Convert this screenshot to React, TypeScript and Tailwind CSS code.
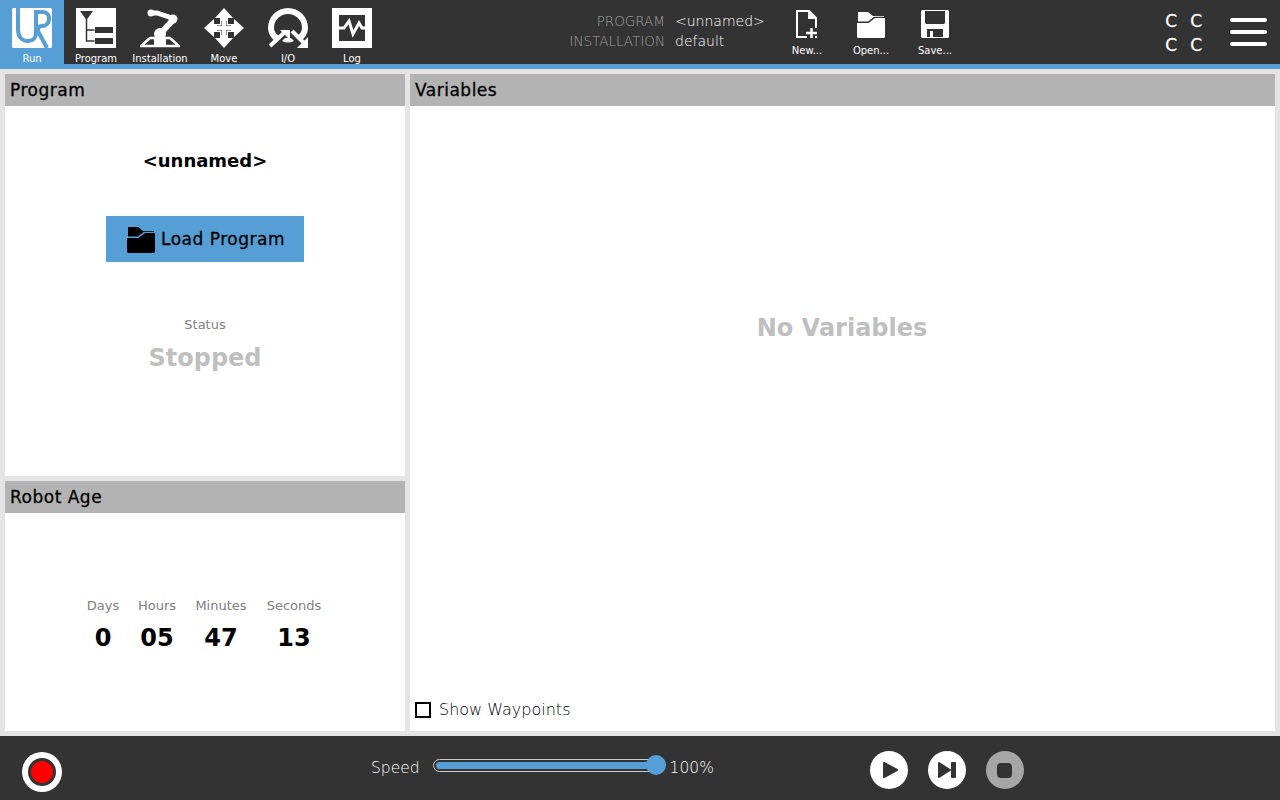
import type { ReactNode } from "react";

const font = "font-['DejaVu_Sans',sans-serif]";

function NavTab({ label, active, children }: { label: string; active?: boolean; children: ReactNode }) {
  return (
    <div className={`flex h-16 w-16 flex-col items-center pt-2 ${active ? "bg-[#559fd6]" : ""}`}>
      <div className="h-10 w-10">{children}</div>
      <span className="mt-[5px] text-[10px] leading-3 text-white">{label}</span>
    </div>
  );
}

function FileButton({ label, children }: { label: string; children: ReactNode }) {
  return (
    <div className="flex h-16 w-16 flex-col items-center pt-2">
      <div className="h-8 w-8">{children}</div>
      <span className="mt-[5px] text-[10px] leading-3 text-white">{label}</span>
    </div>
  );
}

function PanelHeader({ title }: { title: string }) {
  return (
    <div className="flex h-8 items-center bg-[#b3b3b3] px-[5px] pt-[2px] text-[17px] tracking-[0.5px] text-black [-webkit-text-stroke:0.3px_black]">
      {title}
    </div>
  );
}

function AgeCell({ label, value, width }: { label: string; value: string; width: string }) {
  return (
    <div className={`flex flex-col items-center ${width}`}>
      <span className="text-[13px] leading-4 text-[#808080]">{label}</span>
      <span className="mt-[10px] text-[24px] leading-7 font-bold text-black">{value}</span>
    </div>
  );
}

function FolderIcon({ fill }: { fill: string }) {
  return (
    <svg viewBox="0 0 32 32" className="h-full w-full" fill={fill}>
      <path d="M3 4h10l5 4h11v.8H19l-6 4.700H3z" />
      <path d="M2 15h11.500l6.500-5h10v19l-1 1H3l-1-1z" />
    </svg>
  );
}

export default function App() {
  return (
    <div className={`flex h-[800px] w-[1280px] flex-col overflow-hidden bg-[#e4e4e4] ${font}`}>
      <header className="flex h-[69px] shrink-0 border-b-[5px] border-[#559fd6] bg-[#333333]">
        <NavTab label="Run" active>
          <svg viewBox="0 0 40 40" className="h-full w-full">
            <rect width="40" height="40" rx="1.500" fill="#fff" />
            <path d="M6 0v21c0 8 4 12 10 12 5 0 8-3 8-8V4" fill="none" stroke="#559fd6" strokeWidth="4" />
            <path d="M22 4h9c4 0 6 3 6 7s-3 7-7 7c-4 0-5 3-3 7l8 15" fill="none" stroke="#559fd6" strokeWidth="4" />
          </svg>
        </NavTab>
        <NavTab label="Program">
          <svg viewBox="0 0 40 40" className="h-full w-full">
            <rect width="40" height="40" fill="#fff" />
            <path d="M4 3h13l-6.500 9z" fill="#333" />
            <path d="M10.500 11v22h8M10.500 22h8" fill="none" stroke="#333" strokeWidth="1.500" />
            <rect x="19" y="19" width="18" height="6" fill="#333" />
            <rect x="19" y="30" width="18" height="6" fill="#333" />
          </svg>
        </NavTab>
        <NavTab label="Installation">
          <svg viewBox="0 0 40 40" className="h-full w-full" fill="#fff">
            <path d="M1 38l9-8h20l9 8z" fill="none" stroke="#fff" strokeWidth="2.500" />
            <path d="M13 5h4l15 5" fill="none" stroke="#fff" strokeWidth="5" strokeLinecap="round" />
            <circle cx="11" cy="5" r="3.500" />
            <circle cx="33" cy="11" r="4.500" />
            <path d="M33 12L21 25" fill="none" stroke="#fff" strokeWidth="6" />
            <circle cx="20" cy="26" r="6" />
            <rect x="14" y="30" width="12" height="7" />
          </svg>
        </NavTab>
        <NavTab label="Move">
          <svg viewBox="0 0 40 40" className="h-full w-full" fill="#fff">
            <path d="M20 0l9 10h-5v6h6v-5l10 9-10 9v-5h-6v6h5l-9 10-9-10h5v-6h-6v5L0 20l10-9v5h6v-6h-5z" />
            <path d="M17.500 13v5M22.500 13v5M17.500 22v5M22.500 22v5M13 17.500h5M13 22.500h5M22 17.500h5M22 22.500h5" stroke="#333" strokeWidth="0.500" fill="none" />
          </svg>
        </NavTab>
        <NavTab label="I/O">
          <svg viewBox="0 0 40 40" className="h-full w-full">
            <path d="M7 33C3 30 0 25 0 20a20 20 0 0 1 40 0c0 5-3 10-7 13l-4-5c3-2 5-5 5-8a14 14 0 0 0-28 0c0 3 2 6 5 8z" fill="#fff" />
            <path d="M14 33c4 2 8 2 12 0l-3-3h-6z" fill="#fff" />
            <path d="M2 38L18 23" stroke="#fff" strokeWidth="4" fill="none" />
            <path d="M12 22h10v10z" fill="#fff" />
            <path d="M24 23l12 12" stroke="#fff" strokeWidth="4" fill="none" />
            <path d="M40 40H29l11-11z" fill="#fff" />
          </svg>
        </NavTab>
        <NavTab label="Log">
          <svg viewBox="0 0 40 40" className="h-full w-full">
            <path fillRule="evenodd" d="M0 0h40v40H0zM7 7v26h26V7z" fill="#fff" />
            <path d="M7 20h5l5-7 4 13 6-11 3 5h3" fill="none" stroke="#fff" strokeWidth="3" />
          </svg>
        </NavTab>

        <div className="ml-[181px] flex w-[210px] shrink-0 flex-col pt-[11px] text-[14px] leading-5 font-light">
          <div className="flex">
            <span className="w-[100px] shrink-0 text-right text-[13.500px] text-[#a0a0a0]">PROGRAM</span>
            <span className="ml-[10px] text-white">&lt;unnamed&gt;</span>
          </div>
          <div className="flex">
            <span className="w-[100px] shrink-0 text-right text-[13.500px] text-[#a0a0a0]">INSTALLATION</span>
            <span className="ml-[10px] text-white">default</span>
          </div>
        </div>

        <div className="flex">
          <FileButton label="New...">
            <svg viewBox="0 0 32 32" className="h-full w-full">
              <path d="M6 3h12l7 7v19H6z" fill="none" stroke="#fff" strokeWidth="2" />
              <path d="M17 3v8h8z" fill="#fff" />
              <path d="M14 24h12M20 18v12" stroke="#333" strokeWidth="8" />
              <path d="M15 25h11M20.500 20v10" stroke="#fff" strokeWidth="2.500" />
            </svg>
          </FileButton>
          <FileButton label="Open...">
            <FolderIcon fill="#fff" />
          </FileButton>
          <FileButton label="Save...">
            <svg viewBox="0 0 32 32" className="h-full w-full">
              <path fillRule="evenodd" d="M3 2h26l1 1v26l-1 1H3l-1-1V3zM6 3v12l1 1h18l1-1V3zM8 21v8h16v-8z" fill="#fff" />
              <rect x="11" y="23" width="3" height="6" fill="#fff" />
            </svg>
          </FileButton>
        </div>

        <div className="ml-auto flex items-center pr-[13px]">
          <div className="mt-[2px] mr-[28px] grid grid-cols-2 gap-x-[13px] gap-y-[4px] text-[17px] leading-5 text-white [-webkit-text-stroke:0.3px_white]">
            <span>C</span>
            <span>C</span>
            <span>C</span>
            <span>C</span>
          </div>
          <div className="flex w-[37px] flex-col gap-[8px]">
            <div className="h-1 rounded-sm bg-white" />
            <div className="h-1 rounded-sm bg-white" />
            <div className="h-1 rounded-sm bg-white" />
          </div>
        </div>
      </header>

      <main className="flex min-h-0 flex-1 gap-[5px] p-[5px]">
        <div className="flex w-[400px] flex-col gap-[5px]">
          <section className="flex h-[402px] flex-col bg-white">
            <PanelHeader title="Program" />
            <div className="flex flex-col items-center">
              <div className="mt-[43px] text-[18px] leading-6 font-bold text-black">&lt;unnamed&gt;</div>
              <div className="mt-[43px] flex h-[46px] w-[198px] items-center justify-center gap-[4px] bg-[#559fd6] text-[17px] tracking-[0.5px] text-black [-webkit-text-stroke:0.3px_black]">
                <div className="h-8 w-8">
                  <FolderIcon fill="#000" />
                </div>
                <span className="pt-[2px]">Load Program</span>
              </div>
              <div className="mt-[55px] text-[13px] leading-4 text-[#808080]">Status</div>
              <div className="mt-[11px] text-[24px] leading-7 font-bold text-[#bfbfbf]">Stopped</div>
            </div>
          </section>
          <section className="flex flex-1 flex-col bg-white">
            <PanelHeader title="Robot Age" />
            <div className="flex justify-center pt-[85px] pr-[2px]">
              <AgeCell label="Days" value="0" width="w-[52px]" />
              <AgeCell label="Hours" value="05" width="w-[56px]" />
              <AgeCell label="Minutes" value="47" width="w-[72px]" />
              <AgeCell label="Seconds" value="13" width="w-[74px]" />
            </div>
          </section>
        </div>

        <section className="flex flex-1 flex-col bg-white">
          <PanelHeader title="Variables" />
          <div className="flex flex-1 items-start justify-center pt-[208px] pr-[1px] text-[24px] leading-7 font-bold text-[#bfbfbf]">
            No Variables
          </div>
          <div className="flex items-center gap-2 px-[5px] pb-[11px] text-[16px] leading-5 font-light text-black">
            <div className="h-4 w-4 border-2 border-black" />
            Show Waypoints
          </div>
        </section>
      </main>

      <footer className="flex h-16 shrink-0 items-center bg-[#333333]">
        <div className="mt-2 ml-[22px] flex h-10 w-10 items-center justify-center rounded-full bg-white">
          <div className="h-[28px] w-[28px] rounded-full border-[3px] border-[#333333] bg-[#ff0000]" />
        </div>
        <span className="ml-[309px] pt-[1px] text-[15.500px] font-light text-white">Speed</span>
        <div className="relative mb-[6px] ml-[13px] h-[13px] w-[224px] rounded-full border border-[#cccccc] p-[2px]">
          <div className="h-full rounded-full bg-[#559fd6]" />
          <div className="absolute top-[-4.500px] right-[-10px] h-5 w-5 rounded-full bg-[#559fd6]" />
        </div>
        <span className="ml-[13px] pt-[1px] text-[15.500px] font-light text-white">100%</span>
        <div className="mt-1 ml-[156px] flex gap-[20px]">
          <div className="flex h-[38px] w-[38px] items-center justify-center rounded-full bg-white">
            <svg viewBox="0 0 38 38" className="h-full w-full">
              <path d="M14 12l13 7-13 7z" fill="#333" stroke="#333" strokeWidth="2" strokeLinejoin="round" />
            </svg>
          </div>
          <div className="flex h-[38px] w-[38px] items-center justify-center rounded-full bg-white">
            <svg viewBox="0 0 38 38" className="h-full w-full">
              <path d="M11 12l11 7-11 7z" fill="#333" stroke="#333" strokeWidth="2" strokeLinejoin="round" />
              <rect x="23" y="11" width="5" height="16" rx="1" fill="#333" />
            </svg>
          </div>
          <div className="flex h-[38px] w-[38px] items-center justify-center rounded-full bg-[#a6a6a6]">
            <div className="h-[15px] w-[15px] rounded-sm bg-[#333333]" />
          </div>
        </div>
      </footer>
    </div>
  );
}
